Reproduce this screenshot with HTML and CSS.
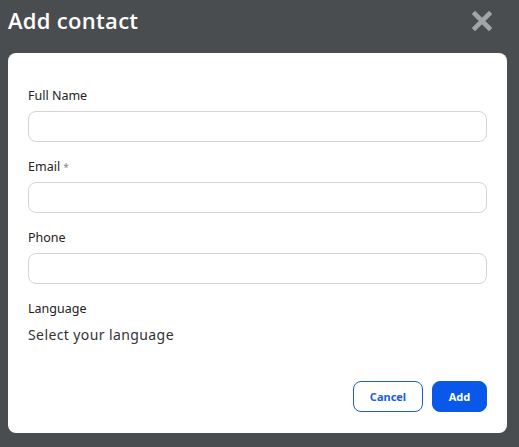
FILE: index.html
```html
<!DOCTYPE html>
<html>
<head>
<meta charset="utf-8">
<link rel="stylesheet" href="styles.css">
</head>
<body>
<div class="page">
  <header class="top">
    <h1 class="title">Add contact</h1>
    <button class="close" aria-label="Close">
      <svg width="20" height="20" viewBox="0 0 20 20"><path d="M3 3 L17 17 M17 3 L3 17" stroke="#a3a4a5" stroke-width="4.6" stroke-linecap="square"/></svg>
    </button>
  </header>
  <div class="modal">
    <div class="field">
      <label class="label">Full Name</label>
      <div class="input"></div>
    </div>
    <div class="field">
      <label class="label">Email <span class="req">*</span></label>
      <div class="input"></div>
    </div>
    <div class="field">
      <label class="label">Phone</label>
      <div class="input"></div>
    </div>
    <div class="field lang">
      <label class="label">Language</label>
      <div class="select">Select your language</div>
    </div>
    <div class="actions">
      <button class="btn cancel">Cancel</button>
      <button class="btn add">Add</button>
    </div>
  </div>
</div>
</body>
</html>
```
FILE: styles.css
```css
html, body {
  margin: 0;
  padding: 0;
  background: #4a4d50;
  width: 519px;
  height: 447px;
  overflow: hidden;
}
.page {
  padding: 0 12px 0 8px;
  display: flex;
  flex-direction: column;
}
.top {
  display: flex;
  justify-content: space-between;
  align-items: center;
  height: 53px;
}
.title {
  margin: 0;
  margin-top: -14px;
  font-family: "Open Sans", sans-serif;
  font-weight: 600;
  font-size: 22px;
  color: #ffffff;
  letter-spacing: 0.3px;
}
.close {
  background: none;
  border: 0;
  padding: 0;
  margin-right: 15px;
  margin-top: -12px;
  width: 20px;
  height: 20px;
  display: flex;
}
.modal {
  background: #ffffff;
  border-radius: 8px;
  height: 380px;
  box-sizing: border-box;
  padding: 35px 20px 0 20px;
  display: flex;
  flex-direction: column;
}
.field {
  display: flex;
  flex-direction: column;
  margin-bottom: 17px;
}
.label {
  font-family: "Noto Sans", sans-serif;
  font-size: 12.5px;
  color: #222;
  line-height: 16px;
  margin-bottom: 7px;
}
.req {
  color: #888;
  font-size: 10px;
}
.input {
  height: 31px;
  box-sizing: border-box;
  border: 1px solid #d4d4d4;
  border-radius: 8px;
}
.select {
  font-family: "Noto Sans", sans-serif;
  font-size: 14px;
  color: #333;
  letter-spacing: 0.4px;
  line-height: 18px;
  margin-top: 2px;
}
.actions {
  display: flex;
  justify-content: flex-end;
  gap: 9px;
  margin-top: 20px;
}
.btn {
  height: 31px;
  border-radius: 8px;
  font-family: "Noto Sans", sans-serif;
  font-weight: 700;
  font-size: 11px;
  padding: 0;
}
.cancel {
  width: 70px;
  background: #fff;
  border: 1px solid #1a5be6;
  color: #1a5be6;
}
.add {
  width: 55px;
  background: #0a58ea;
  border: 1px solid #0a58ea;
  color: #fff;
}
```
